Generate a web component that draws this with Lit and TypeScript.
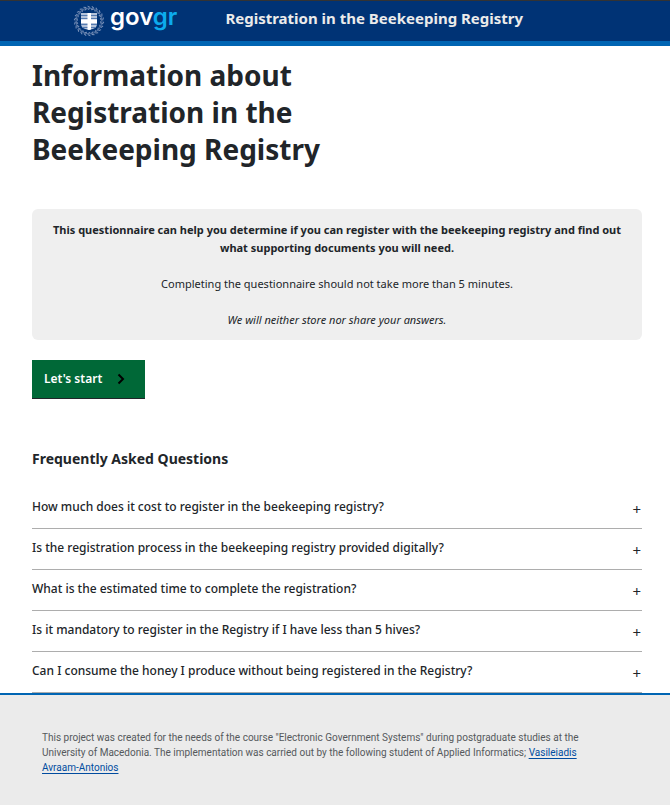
import { LitElement, html, css, svg } from "lit";
import { customElement, state } from "lit/decorators.js";

const QUESTIONS = [
  "How much does it cost to register in the beekeeping registry?",
  "Is the registration process in the beekeeping registry provided digitally?",
  "What is the estimated time to complete the registration?",
  "Is it mandatory to register in the Registry if I have less than 5 hives?",
  "Can I consume the honey I produce without being registered in the Registry?",
];

// One leaf pair of the wreath, repeated around the shield.
const leaves = Array.from({ length: 22 }, (_, i) => {
  const angle = (i * 360) / 22;
  return svg`<path transform="rotate(${angle} 16 16)" d="M14.6 1.2l2.6 1.2M14.8 4.6l2.4-1.2" />`;
});

@customElement("gov-header")
export class GovHeader extends LitElement {
  static styles = css`
    :host {
      display: block;
    }
    .bar {
      display: flex;
      align-items: flex-start;
      height: 40px;
      padding: 0 24px 0 73px;
      border-top: 1px solid #333;
      border-bottom: 5px solid #0065b3;
      background: #003375;
    }
    .brand {
      display: flex;
      align-items: flex-start;
      gap: 5px;
      margin-right: 48px;
      text-decoration: none;
    }
    .emblem {
      display: block;
      width: 32px;
      height: 32px;
      margin-top: 4px;
    }
    .word {
      color: #fff;
      font: 600 24px/32px Inter, sans-serif;
    }
    .tld {
      color: #0cabee;
    }
    .title {
      color: #ebebeb;
      font-weight: 700;
      font-size: 15px;
      line-height: 34px;
    }
  `;

  render() {
    return html`
      <header class="bar">
        <a class="brand" href="#">
          <svg class="emblem" viewBox="0 0 32 32" aria-hidden="true">
            <g fill="none" stroke="#7f97bd" stroke-width="1">${leaves}</g>
            <circle cx="16" cy="16" r="13" fill="none" stroke="#5674a3" stroke-width="1" />
            <path d="M8 8h16v11c0 4-4 5-8 6c-4-1-8-2-8-6z" fill="#b4c3da" />
            <path
              d="M8 10.5h16M8 13.5h16M8 19.5h16M9 22.5h14"
              stroke="#567bb0"
              stroke-width="1"
            />
            <path d="M14.5 8h3.5v6.5h6v3.5h-6v6.5l-2 .5-1.5-.5V18H8v-3.5h6.5z" fill="#fff" />
          </svg>
          <span class="word">gov<span class="tld">gr</span></span>
        </a>
        <span class="title">Registration in the Beekeeping Registry</span>
      </header>
    `;
  }
}

@customElement("faq-list")
export class FaqList extends LitElement {
  @state() private open = -1;

  static styles = css`
    :host {
      display: block;
    }
    .heading {
      margin: 0 0 19px;
      font-weight: 700;
      font-size: 14px;
      line-height: 20px;
    }
    .item {
      display: flex;
      justify-content: space-between;
      align-items: center;
      width: 100%;
      height: 41px;
      padding: 0;
      border: 0;
      border-bottom: 1px solid #adadad;
      background: none;
      color: inherit;
      font: inherit;
      font-weight: 500;
      font-size: 12px;
      line-height: 18px;
      text-align: left;
      cursor: pointer;
    }
    .question {
      padding-bottom: 2px;
    }
    .sign {
      padding: 2px 1px 0 12px;
      font-size: 15px;
      font-weight: 400;
    }
  `;

  render() {
    return html`
      <h2 class="heading">Frequently Asked Questions</h2>
      ${QUESTIONS.map(
        (question, i) => html`
          <button
            class="item"
            type="button"
            aria-expanded=${this.open === i}
            @click=${() => (this.open = this.open === i ? -1 : i)}
          >
            <span class="question">${question}</span>
            <span class="sign" aria-hidden="true">+</span>
          </button>
        `
      )}
    `;
  }
}

@customElement("gov-footer")
export class GovFooter extends LitElement {
  static styles = css`
    :host {
      display: block;
      border-top: 2px solid #0065b3;
      background: #ebebeb;
    }
    .note {
      margin: 0;
      padding: 35px 80px 29px 42px;
      color: #55595c;
      font: 10px/15px Roboto, sans-serif;
    }
    .link {
      color: #004b9f;
      text-underline-offset: 2px;
    }
  `;

  render() {
    return html`
      <footer>
        <p class="note">
          This project was created for the needs of the course "Electronic Government Systems"
          during postgraduate studies at the University of Macedonia. The implementation was carried
          out by the following student of Applied Informatics;
          <a class="link" href="#">Vasileiadis Avraam-Antonios</a>
        </p>
      </footer>
    `;
  }
}

@customElement("app-root")
export class AppRoot extends LitElement {
  static styles = css`
    :host {
      display: flex;
      flex-direction: column;
      min-height: 100vh;
      background: #fff;
      color: #212529;
      font-family: "Noto Sans", "Open Sans", sans-serif;
    }
    .main {
      padding: 11px 28px 0 32px;
    }
    .heading {
      max-width: 400px;
      margin: 0 0 41px;
      font-weight: 700;
      font-size: 28px;
      line-height: 37px;
    }
    .info {
      display: grid;
      gap: 18px;
      padding: 12px 8px 11px;
      border-radius: 6px;
      background: #efefef;
      font-size: 11px;
      line-height: 18px;
      text-align: center;
    }
    .info p {
      margin: 0;
    }
    .lead {
      font-weight: 700;
    }
    .private {
      font-style: italic;
    }
    .start {
      display: flex;
      align-items: center;
      gap: 15px;
      height: 38px;
      margin: 20px 0 51px;
      padding: 0 20px 0 12px;
      border: 0;
      background: #006837;
      box-shadow: 0 1px 0 #212529;
      color: #fff;
      font: inherit;
      font-weight: 600;
      font-size: 12px;
      line-height: 18px;
      cursor: pointer;
    }
    .chevron {
      width: 8px;
      height: 12px;
    }
    .footer {
      flex: 1;
    }
  `;

  render() {
    return html`
      <gov-header></gov-header>
      <main class="main">
        <h1 class="heading">Information about Registration in the Beekeeping Registry</h1>
        <section class="info">
          <p class="lead">
            This questionnaire can help you determine if you can register with the beekeeping
            registry and find out what supporting documents you will need.
          </p>
          <p>Completing the questionnaire should not take more than 5 minutes.</p>
          <p class="private">We will neither store nor share your answers.</p>
        </section>
        <button class="start" type="button">
          Let's start
          <svg class="chevron" viewBox="0 0 8 12" aria-hidden="true">
            <path d="M1.5 1.5L6 6l-4.5 4.5" fill="none" stroke="#000" stroke-width="2" />
          </svg>
        </button>
        <faq-list></faq-list>
      </main>
      <gov-footer class="footer"></gov-footer>
    `;
  }
}
